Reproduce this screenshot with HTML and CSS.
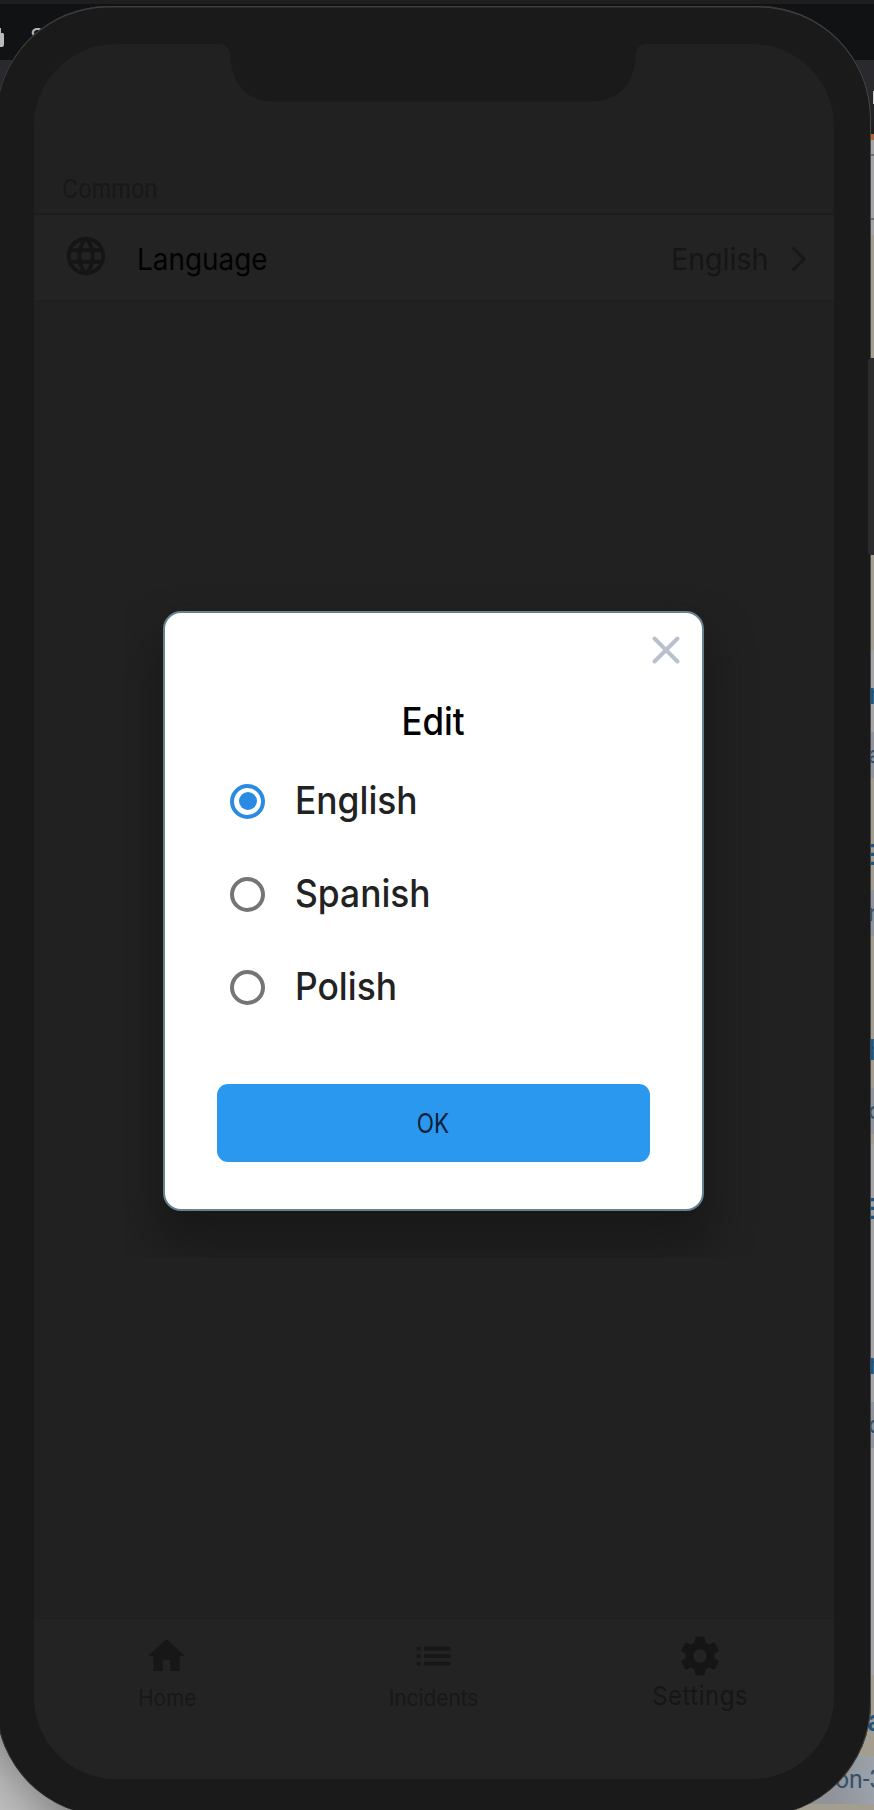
FILE: index.html
```html
<!DOCTYPE html>
<html lang="en">
<head>
<meta charset="utf-8">
<title>Settings</title>
<link rel="stylesheet" href="styles.css">
</head>
<body>
<div class="stage">
  <div class="desktop">
    <div class="titlebar"></div>
    <div class="toolbar">
      <svg class="lock" width="5" height="20" viewBox="0 0 5 20"><path d="M0 0h1v5h2q1 0 1 2v9q0 3-2 3H0z" fill="#b9babd"/></svg>
      <span class="address">Si</span>
    </div>
    <div class="bookmarks"><span class="mark"></span></div>
    <div class="accent"></div>
    <div class="strip gray h95 ruled"></div>
    <div class="strip sand h123"></div>
    <div class="strip dark"></div>
    <div class="strip sand h95"></div>
    <div class="strip gray h82 m1"><b>m</b></div>
    <div class="strip band"><i>a</i></div>
    <div class="strip sand h112 e1"><b>E</b></div>
    <div class="strip band"><i>n</i></div>
    <div class="strip sand h152 hh"><b>h</b></div>
    <div class="strip band"><i>o</i></div>
    <div class="strip sand h10"></div>
    <div class="strip gray h112 e2"><b>E</b></div>
    <div class="strip gray h146 m2"><b>m</b></div>
    <div class="strip band"><i>d</i></div>
    <div class="strip gray h227"></div>
    <div class="strip sand h81 aa"><b>a</b></div>
    <div class="strip band last"><i>on-3</i></div>
    <div class="strip sand h6"></div>
  </div>
  <div class="glow"></div>
  <div class="sidekey"></div>

  <div class="phone">
    <div class="screen">
      <div class="section"><span class="t common">Common</span></div>
      <div class="row">
        <svg class="globe" width="46" height="46" viewBox="0 0 24 24"><path fill="#151515" d="M11.99 2C6.47 2 2 6.48 2 12s4.47 10 9.99 10C17.52 22 22 17.52 22 12S17.52 2 11.99 2zm6.93 6h-2.95c-.32-1.25-.78-2.45-1.38-3.56 1.84.63 3.37 1.91 4.33 3.56zM12 4.04c.83 1.2 1.48 2.53 1.91 3.96h-3.82c.43-1.43 1.08-2.76 1.91-3.96zM4.26 14C4.1 13.36 4 12.69 4 12s.1-1.36.26-2h3.38c-.08.66-.14 1.32-.14 2s.06 1.34.14 2H4.26zm.82 2h2.95c.32 1.25.78 2.45 1.38 3.56-1.84-.63-3.37-1.9-4.33-3.56zm2.95-8H5.08c.96-1.66 2.49-2.93 4.33-3.56C8.81 5.55 8.35 6.75 8.03 8zM12 19.96c-.83-1.2-1.48-2.53-1.91-3.96h3.82c-.43 1.43-1.08 2.76-1.91 3.96zM14.34 14H9.66c-.09-.66-.16-1.32-.16-2s.07-1.35.16-2h4.68c.09.65.16 1.32.16 2s-.07 1.34-.16 2zm.25 5.56c.6-1.11 1.06-2.31 1.38-3.56h2.95c-.96 1.65-2.49 2.93-4.33 3.56zM16.36 14c.08-.66.14-1.32.14-2s-.06-1.34-.14-2h3.38c.16.64.26 1.31.26 2s-.1 1.36-.26 2h-3.38z"/></svg>
        <span class="t language">Language</span>
        <span class="t value">English</span>
        <svg class="chevron" width="18" height="28" viewBox="0 0 18 28"><path d="M2.500 2.500l11.500 11.500L2.500 25.500" fill="none" stroke="#181818" stroke-width="3"/></svg>
      </div>
      <div class="content"></div>
      <nav class="tabs">
        <div class="tab"><svg width="45" height="45" viewBox="0 0 24 24"><path fill="#171717" d="M10 20v-6h4v6h5v-8h3L12 3 2 12h3v8z"/></svg><span class="t home">Home</span></div>
        <div class="tab"><svg width="45" height="45" viewBox="0 0 24 24"><path fill="#171717" d="M3 13h2v-2H3v2zm0 4h2v-2H3v2zm0-8h2V7H3v2zm4 4h14v-2H7v2zm0 4h14v-2H7v2zM7 7v2h14V7H7z"/></svg><span class="t incidents">Incidents</span></div>
        <div class="tab"><svg width="46" height="46" viewBox="0 0 24 24"><path fill="#151515" d="M19.43 12.98c.04-.32.07-.64.07-.98s-.03-.66-.07-.98l2.11-1.65c.19-.15.24-.42.12-.64l-2-3.46c-.12-.22-.39-.3-.61-.22l-2.49 1c-.52-.4-1.08-.73-1.69-.98l-.38-2.65C14.46 2.18 14.25 2 14 2h-4c-.25 0-.46.18-.49.42l-.38 2.65c-.61.25-1.17.59-1.69.98l-2.49-1c-.23-.09-.49 0-.61.22l-2 3.46c-.13.22-.07.49.12.64l2.11 1.65c-.04.32-.07.65-.07.98s.03.66.07.98l-2.11 1.65c-.19.15-.24.42-.12.64l2 3.46c.12.22.39.3.61.22l2.49-1c.52.4 1.08.73 1.69.98l.38 2.65c.03.24.24.42.49.42h4c.25 0 .46-.18.49-.42l.38-2.65c.61-.25 1.17-.59 1.69-.98l2.49 1c.23.09.49 0 .61-.22l2-3.46c.12-.22.07-.49-.12-.64l-2.11-1.65zM12 15.5c-1.93 0-3.5-1.57-3.5-3.5s1.57-3.5 3.5-3.5 3.5 1.57 3.5 3.5-1.57 3.5-3.5 3.5z"/></svg><span class="t settings">Settings</span></div>
      </nav>
    </div>
    <svg class="notch" width="422" height="58" viewBox="0 0 422 58"><path d="M0 0Q8 1 8.500 13C10 41 26 57.500 52 57.500H370C396 57.500 412 41 413.500 13Q414 1 422 0z" fill="#1a1a1a"/></svg>
  </div>

  <div class="shadowclip"><div class="shadow"></div></div>
  <div class="modal">
    <svg class="close" width="32" height="32" viewBox="0 0 32 32"><path d="M4.500 4.500l23 23M27.500 4.500l-23 23" stroke="#b9c1cc" stroke-width="4" stroke-linecap="round"/></svg>
    <h1><span class="t edit">Edit</span></h1>
    <label class="option"><span class="radio on"></span><span class="t">English</span></label>
    <label class="option"><span class="radio"></span><span class="t">Spanish</span></label>
    <label class="option"><span class="radio"></span><span class="t">Polish</span></label>
    <button><span class="t ok">OK</span></button>
  </div>
</div>
</body>
</html>
```
FILE: styles.css
```css
* { box-sizing: border-box; }
body { margin: 0; font-family: Inter, Roboto, sans-serif; }
.stage { position: relative; width: 874px; height: 1810px; overflow: hidden; background: #1a1a1a; }

/* Browser window behind the device */
.desktop { display: flex; flex-direction: column; height: 1810px; overflow: hidden; }
.titlebar { height: 4px; background: #1e1e20; }
.toolbar { height: 56px; background: #111214; display: flex; padding: 24px 0 0; gap: 25px; }
.address { color: #b5b5b8; font-size: 23px; line-height: 26px; margin-top: -4px; }
.bookmarks { height: 74px; background: linear-gradient(#29292e 40%, #1c1d21); padding: 31px 0 0 873px; }
.mark { display: block; width: 1px; height: 13px; background: #ccc; }
.accent { height: 6px; background: #b4623a; }
.strip { flex: none; overflow: hidden; padding-left: 868px; white-space: nowrap; display: flex; align-items: center; }
.strip b { color: #1c5587; font-size: 29px; line-height: 30px; font-weight: 600; }
.strip i { color: #355069; font-size: 24px; line-height: 28px; font-style: normal; }
.gray { background: #a5a4a7; }
.sand { background: #a49e91; }
.band { background: #8f949f; height: 46px; }
.last { height: 48px; padding-left: 835px; background: linear-gradient(90deg, #909499 833px, #9ba2aa); }
.last i { font-family: Roboto, sans-serif; font-size: 26px; margin-top: -2px; transform: scaleX(.95); transform-origin: left; }
.dark { height: 197px; background: #2c2c2c; }
.ruled { background: linear-gradient(#a5a4a7 14px, #707073 14px 16px, #a5a4a7 16px 78px, #707073 78px 80px, #a5a4a7 80px); }
.h95 { height: 95px; }
.h123 { height: 123px; }
.h82 { height: 82px; }
.h112 { height: 112px; }
.h152 { height: 152px; }
.h10 { height: 10px; }
.h146 { height: 146px; }
.h227 { height: 227px; }
.h81 { height: 81px; }
.h6 { height: 6px; }
.m1 { padding-top: 6px; }
.e1 { padding: 42px 0 0 864px; }
.hh { padding-top: 76px; }
.e2 { padding: 18px 0 0 864px; }
.m2 { padding-top: 70px; }
.aa { padding: 10px 0 0 867px; }
.glow { position: absolute; left: 0; bottom: 0; width: 110px; height: 110px; background: linear-gradient(50deg, #bcbcbc 0, #b0b0b0 12%, #777 48%, #333 70%); }
.sidekey { position: absolute; left: 868px; top: 358px; width: 12px; height: 197px; background: #2c2c2c; border-radius: 4px 0 0 4px; z-index: 2; }

/* Device */
.phone { position: absolute; left: -4px; top: 6px; width: 874.500px; height: 1810px; padding: 38px 37px 38px 37.500px; border-radius: 113px; background: #1a1a1a; box-shadow: inset 0 1.500px 0 #3d3d3d, inset -1px 0 0 #484848, inset 1px 0 0 #333; }
.screen { height: 1734.500px; border-radius: 82px; overflow: hidden; background: #212121; display: flex; flex-direction: column; }
.notch { position: absolute; left: 226px; top: 37.500px; }
.t { display: inline-block; white-space: nowrap; transform-origin: left center; }
.section { height: 169px; display: flex; align-items: flex-end; padding: 0 0 8px 28px; }
.common { color: #181818; font-size: 26px; line-height: 32px; transform: scaleX(.86); }
.row { height: 89px; border-top: 2px solid #1d1d1d; border-bottom: 2px solid #1f1f1f; background: #232323; display: flex; align-items: center; padding: 0 26px 0 29px; }
.globe { margin-top: -3px; }
.language { margin: 3px 0 0 28px; color: #020202; font-size: 30px; line-height: 36px; transform: scaleX(.93); }
.value { margin: 3px 21px 0 auto; color: #161616; font-size: 30px; line-height: 36px; transform: scaleX(.95); transform-origin: right center; }
.chevron { margin-top: 3px; }
.content { flex: 1; }
.tabs { height: 161px; border-top: 1px solid #1f1f1f; background: #232323; display: grid; grid-template-columns: repeat(3, 1fr); padding-top: 15px; }
.tab { display: flex; flex-direction: column; align-items: center; }
.tab svg { display: block; height: 46px; margin-top: -1px; }
.tab .t { transform-origin: center; color: #181818; font-size: 23px; line-height: 28px; margin-top: 5px; }
.tab .home { transform: scaleX(.9); }
.tab .incidents { transform: scaleX(.905); }
.tab .settings { font-size: 26px; letter-spacing: .6px; margin-top: 3px; transform: scaleX(.92); color: #161616; }

/* Dialog */
.shadowclip { position: absolute; left: 124px; top: 560px; width: 638px; height: 698px; overflow: hidden; }
.shadow { margin: 51px 0 0 40px; width: 540px; height: 600px; border-radius: 17px; box-shadow: 0 28px 42px 6px rgba(20,20,20,.65); }
.modal { position: absolute; left: 163px; top: 611px; width: 541px; height: 600px; background: #fff; border: 2px solid #66828e; border-radius: 18px; padding: 89px 52px 0; display: flex; flex-direction: column; }
.close { position: absolute; right: 20px; top: 21px; }
h1 { margin: 0 0 34px; text-align: center; font-weight: 500; font-size: 37.500px; line-height: 40px; color: #000; }
.edit { transform: scaleX(.93); transform-origin: center; }
.option { display: flex; align-items: center; height: 50px; margin-bottom: 43px; padding-left: 13px; gap: 30px; font-size: 37.500px; font-weight: 500; color: #222; line-height: 50px; }
.option .t { transform: scaleX(.943); }
.radio { width: 35px; height: 35px; border: 4px solid #757575; border-radius: 50%; display: grid; place-items: center; }
.on { border-color: #2b8be2; }
.on::after { content: ""; width: 18px; height: 18px; border-radius: 50%; background: #2b8be2; }
button { height: 77.500px; border: 0; border-radius: 11px; background: #2b98f0; color: #0b2136; font: 400 26.500px/34px Inter, sans-serif; margin-top: 29px; padding: 0; }
.ok { transform: scaleX(.85); transform-origin: center; }
```
